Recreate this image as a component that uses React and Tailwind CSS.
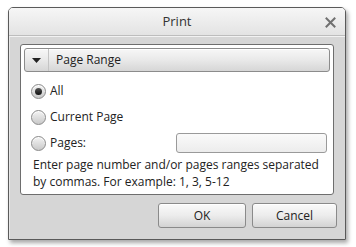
import React from "react";

const font = { fontFamily: '"Open Sans", "DejaVu Sans", sans-serif' };

function Radio({ checked, label }) {
  return (
    <div className="flex items-center gap-[4px] h-[20px]">
      <span className="w-[15px] h-[15px] rounded-full border border-[#8a8a8a] bg-gradient-to-b from-[#f4f4f4] to-[#c9c9c9] flex items-center justify-center shadow-[inset_0_1px_0_#fff]">
        {checked && <span className="w-[7px] h-[7px] rounded-full bg-gradient-to-b from-[#555] to-[#111]" />}
      </span>
      <span className="text-[12px] text-[#222]">{label}</span>
    </div>
  );
}

export default function App() {
  return (
    <div className="w-[356px] h-[247px] bg-white pt-[7px] pl-[8px]" style={font}>
      <div className="w-[338px] h-[233px] border border-[#5a5a5a] rounded-t-[5px] flex flex-col overflow-hidden shadow-[2px_3px_4px_rgba(0,0,0,0.35)]">
        <div className="h-[28px] shrink-0 bg-gradient-to-b from-[#f6f6f6] to-[#e3e3e3] border-b border-[#bdbdbd] flex items-center relative">
          <span className="flex-1 text-center text-[13px] text-[#333]">Print</span>
          <svg className="absolute right-[9px] top-[9px]" width="11" height="11" viewBox="0 0 11 11">
            <path d="M1.5 1.5 L9.5 9.5 M9.5 1.5 L1.5 9.5" stroke="#707070" strokeWidth="2" strokeLinecap="square" />
          </svg>
        </div>
        <div className="flex-1 bg-[#d6d6d6] border-t border-[#f2f2f2] border-l border-l-[#e6e6e6] flex flex-col pl-[10px] pr-[11px] pt-[7px]">
          <div className="h-[151px] bg-white border border-[#6e6e6e] rounded-[3px] p-[3px] flex flex-col">
            <div className="h-[24px] border border-[#8c8c8c] rounded-[3px] bg-gradient-to-b from-[#f7f7f7] via-[#e9e9e9] to-[#d6d6d6] flex items-center shadow-[inset_0_1px_0_#fff]">
              <div className="w-[24px] h-full flex items-center justify-center border-r border-[#c4c4c4]">
                <svg width="9" height="5" viewBox="0 0 9 5"><path d="M0 0 H9 L4.5 5 Z" fill="#222" /></svg>
              </div>
              <span className="pl-[7px] text-[12px] text-[#222]">Page Range</span>
            </div>
            <div className="flex flex-col gap-[6px] pl-[7px] pt-[9px]">
              <Radio checked label="All" />
              <Radio label="Current Page" />
              <div className="flex items-center justify-between pr-[3px]">
                <Radio label="Pages:" />
                <div className="w-[151px] h-[20px] border border-[#9a9a9a] rounded-[3px] bg-gradient-to-b from-[#fafafa] to-[#ececec]" />
              </div>
            </div>
            <p className="pl-[9px] pt-[3px] text-[12px] leading-[17px] text-[#222] whitespace-nowrap">
              Enter page number and/or pages ranges separated
              <br />
              by commas. For example: 1, 3, 5-12
            </p>
          </div>
          <div className="flex justify-end gap-[6px] pt-[8px] mr-[-3px]">
            <button className="w-[88px] h-[25px] border border-[#8a8a8a] rounded-[3px] bg-gradient-to-b from-[#fafafa] via-[#ececec] to-[#d3d3d3] text-[12px] text-[#222] shadow-[inset_0_1px_0_#fff]">OK</button>
            <button className="w-[85px] h-[25px] border border-[#8a8a8a] rounded-[3px] bg-gradient-to-b from-[#fafafa] via-[#ececec] to-[#d3d3d3] text-[12px] text-[#222] shadow-[inset_0_1px_0_#fff]">Cancel</button>
          </div>
        </div>
      </div>
    </div>
  );
}
